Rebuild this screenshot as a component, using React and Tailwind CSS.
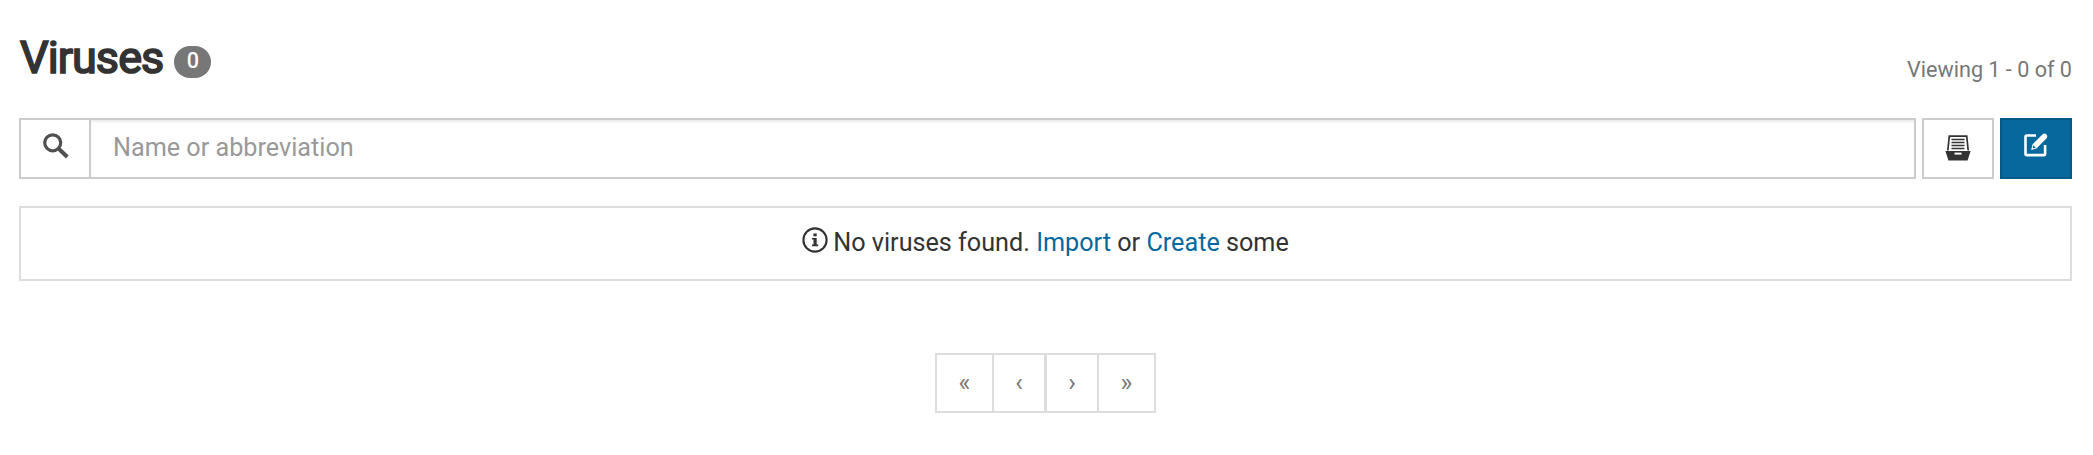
function SearchIcon() {
  return (
    <svg width="26" height="26" viewBox="0 0 26 26" fill="none" stroke="#505050">
      <circle cx="9.7" cy="9.8" r="8" strokeWidth="3.2" />
      <path d="M15.5 15.5L24.3 24" strokeWidth="4" />
    </svg>
  );
}

function FilingIcon() {
  return (
    <svg width="26" height="26" viewBox="0 0 26 26">
      <path d="M2.8 15.5L4.3 1.2H21.7L23.2 15.5" fill="none" stroke="#333" strokeWidth="1.7" />
      <path d="M6.5 4.5H19.5M6.5 7.5H19.5M6.5 10.5H19.5M6.5 13.5H19.5" stroke="#333" strokeWidth="1.3" />
      <path d="M0.4 16H25.6L22.6 25.6H3.4Z" fill="#333" />
      <path d="M9.5 18.6H16.5" stroke="#fff" strokeWidth="2" />
    </svg>
  );
}

function EditIcon() {
  return (
    <svg width="24" height="24" viewBox="0 0 24 24">
      <path d="M12 2.5H2.8Q1.5 2.5 1.5 3.8V20.8Q1.5 22.1 2.8 22.1H19.8Q21.1 22.1 21.1 20.8V12" fill="none" stroke="#fff" strokeWidth="2.6" />
      <path d="M7.2 16.9L8.4 11.6L18.4 1.6Q20.6 -0.4 22.4 1.5Q24.2 3.4 22.4 5.4L12.4 15.5Z" fill="#fff" />
      <path d="M9.3 12.3L11.8 14.7L9.4 15.3L8.7 14.6Z" fill="#07689d" />
    </svg>
  );
}

function InfoIcon() {
  return (
    <svg width="26" height="26" viewBox="0 0 26 26">
      <circle cx="13" cy="13" r="11.6" fill="none" stroke="#333" strokeWidth="2.1" />
      <path d="M11.4 6.6H14.7V9.2H11.4ZM10 10.9H14.7V17.6H16.2V19.2H10V17.6H11.5V12.4H10Z" fill="#333" />
    </svg>
  );
}

export default function App() {
  return (
    <main className="h-[455px] bg-white pl-[19px] pr-[21px] font-['Roboto',sans-serif] text-[25.2px] text-[#333]">
      <header className="flex h-[118px] justify-between">
        <div className="flex">
          <h1 className="mt-[29px] w-[155px] pl-px text-[45px] leading-[58px] font-normal tracking-[-0.95px] whitespace-nowrap [-webkit-text-stroke:1.7px_#333]">Viruses</h1>
          <span className="mt-[46px] flex h-8 w-[37px] justify-center rounded-[18px] bg-[#777] pl-px text-[21.6px] leading-[29px] font-medium text-white">0</span>
        </div>
        <span className="mt-[54px] text-[21.6px] leading-[32px] text-[#777]">Viewing 1 - 0 of 0</span>
      </header>
      <div className="flex h-[61px] gap-[6px]">
        <div className="flex flex-1 border-2 border-[#ccc]">
          <div className="flex w-[70px] border-r-2 border-[#ccc] pt-[13px] pl-[22px]">
            <SearchIcon />
          </div>
          <div className="flex-1 pl-[22px] leading-[56px] text-[#999] shadow-[inset_0_2px_2px_rgba(0,0,0,0.075)]">Name or abbreviation</div>
        </div>
        <button className="flex w-[72px] border-2 border-[#ccc] pt-[15px] pl-[21px]" aria-label="Import">
          <FilingIcon />
        </button>
        <button className="flex w-[72px] border-2 border-[#065a87] bg-[#07689d] pt-[13px] pl-[22px]" aria-label="Create">
          <EditIcon />
        </button>
      </div>
      <section className="mt-[27px] flex h-[75px] justify-center border-2 border-[#ddd]">
        <div className="mt-[19px] mr-[5px]"><InfoIcon /></div>
        <p className="leading-[70px]">
          No viruses found. <a className="text-[#07689d]">Import</a> or <a className="text-[#07689d]">Create</a> some
        </p>
      </section>
      <nav className="mx-auto mt-[72px] flex h-[60px] w-[221px] border-2 border-[#ddd] text-center leading-[56px] text-[#777]">
        <span className="w-[57px] border-r-2 border-[#ddd]">«</span>
        <span className="w-[53px] border-r-3 border-[#ddd]">‹</span>
        <span className="w-[52px] border-r-2 border-[#ddd]">›</span>
        <span className="w-[55px]">»</span>
      </nav>
    </main>
  );
}
